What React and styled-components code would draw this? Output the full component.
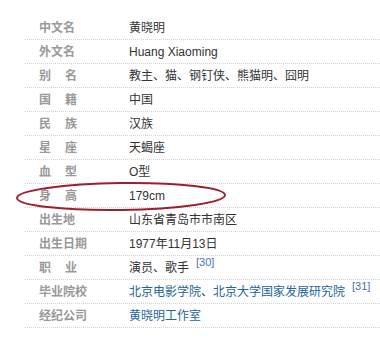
import React from 'react';
import styled, { createGlobalStyle } from 'styled-components';

const GlobalStyle = createGlobalStyle`
  html, body {
    margin: 0;
    padding: 0;
    background: #fff;
  }
  body {
    font-family: Arial, "Liberation Sans", "Noto Sans CJK SC", sans-serif;
    font-size: 12px;
    color: #333;
  }
`;

const Wrapper = styled.div`
  position: relative;
  width: 380px;
  height: 345px;
  padding: 16px 0 0 25px;
  box-sizing: border-box;
`;

const Table = styled.dl`
  margin: 0;
  display: flex;
  flex-direction: column;
`;

const Row = styled.div`
  display: flex;
  align-items: flex-start;
  height: 21px;
  padding-top: 2px;
  border-bottom: 1px dotted #d4d4d4;
  padding-left: 14px;
`;

const Label = styled.dt`
  width: 90px;
  flex-shrink: 0;
  font-weight: bold;
  color: #999;
  line-height: 21px;
  white-space: nowrap;
`;

const SpacedLabel = styled.span`
  display: inline-flex;
  justify-content: space-between;
  width: 38px;
`;

const Value = styled.dd`
  margin: 0;
  line-height: 21px;
  white-space: nowrap;
  display: flex;
  align-items: flex-start;
`;

const Link = styled.a`
  color: #1c6699;
  text-decoration: none;
`;

const Ref = styled.sup`
  font-size: 11px;
  color: #4a72b0;
  margin-left: 7px;
  line-height: 12px;
  vertical-align: top;
  position: relative;
  top: -2px;
`;

const Ellipse = styled.svg`
  position: absolute;
  left: 14px;
  top: 180px;
  pointer-events: none;
`;

const rows = [
  { label: '中文名', value: '黄晓明' },
  { label: '外文名', value: 'Huang Xiaoming' },
  { label: ['别', '名'], value: '教主、猫、钢钉侠、熊猫明、囧明' },
  { label: ['国', '籍'], value: '中国' },
  { label: ['民', '族'], value: '汉族' },
  { label: ['星', '座'], value: '天蝎座' },
  { label: ['血', '型'], value: 'O型' },
  { label: ['身', '高'], value: '179cm' },
  { label: '出生地', value: '山东省青岛市市南区' },
  { label: '出生日期', value: '1977年11月13日' },
  { label: ['职', '业'], value: '演员、歌手', ref: '[30]' },
  {
    label: '毕业院校',
    links: ['北京电影学院', '北京大学国家发展研究院'],
    ref: '[31]',
  },
  { label: '经纪公司', links: ['黄晓明工作室'] },
];

function App() {
  return (
    <Wrapper>
      <GlobalStyle />
      <Table>
        {rows.map((row) => (
          <Row key={Array.isArray(row.label) ? row.label.join('') : row.label}>
            <Label>
              {Array.isArray(row.label) ? (
                <SpacedLabel>
                  <span>{row.label[0]}</span>
                  <span>{row.label[1]}</span>
                </SpacedLabel>
              ) : (
                row.label
              )}
            </Label>
            <Value>
              {row.links
                ? row.links.map((l, i) => (
                    <React.Fragment key={l}>
                      {i > 0 && '、'}
                      <Link href="#">{l}</Link>
                    </React.Fragment>
                  ))
                : row.value}
              {row.ref && <Ref>{row.ref}</Ref>}
            </Value>
          </Row>
        ))}
      </Table>
      <Ellipse width="220" height="34" viewBox="0 0 220 34">
        <ellipse
          cx="107"
          cy="16.5"
          rx="104"
          ry="13.5"
          fill="none"
          stroke="#9e1f2c"
          strokeWidth="2"
          transform="rotate(-0.8 107 16.5)"
        />
      </Ellipse>
    </Wrapper>
  );
}

export default App;
